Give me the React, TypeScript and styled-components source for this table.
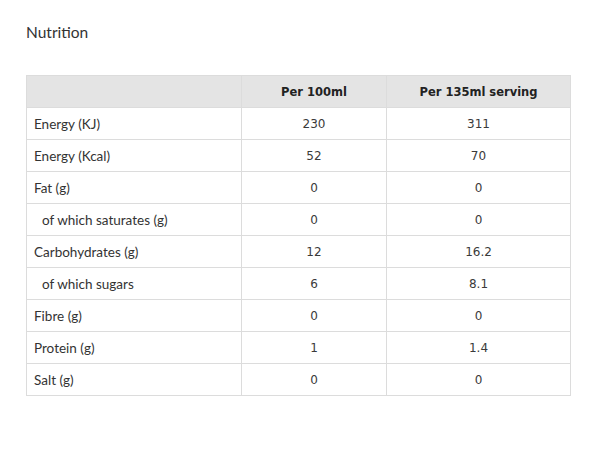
import styled, { createGlobalStyle } from 'styled-components'

type Row = {
    label: string;
    per100: string;
    perServing: string;
    sub?: boolean;
}

const rows: Row[] = [
    { label: 'Energy (KJ)', per100: '230', perServing: '311' },
    { label: 'Energy (Kcal)', per100: '52', perServing: '70' },
    { label: 'Fat (g)', per100: '0', perServing: '0' },
    { label: 'of which saturates (g)', per100: '0', perServing: '0', sub: true },
    { label: 'Carbohydrates (g)', per100: '12', perServing: '16.2' },
    { label: 'of which sugars', per100: '6', perServing: '8.1', sub: true },
    { label: 'Fibre (g)', per100: '0', perServing: '0' },
    { label: 'Protein (g)', per100: '1', perServing: '1.4' },
    { label: 'Salt (g)', per100: '0', perServing: '0' },
]

function App() {
    return (
        <>
            <GlobalStyle />
            <Page>
                <Title>Nutrition</Title>
                <Table>
                    <colgroup>
                        <col style={{ width: 215 }} />
                        <col style={{ width: 145 }} />
                        <col style={{ width: 184 }} />
                    </colgroup>
                    <thead>
                        <tr>
                            <TH></TH>
                            <TH>Per 100ml</TH>
                            <TH>Per 135ml serving</TH>
                        </tr>
                    </thead>
                    <tbody>
                        {rows.map(row => (
                            <tr key={row.label}>
                                <Label sub={row.sub}>{row.label}</Label>
                                <Value>{row.per100}</Value>
                                <Value>{row.perServing}</Value>
                            </tr>
                        ))}
                    </tbody>
                </Table>
            </Page>
        </>
    )
}
export default App

const GlobalStyle = createGlobalStyle`
    * {
        margin: 0;
        padding: 0;
        box-sizing: border-box;
    }
    body {
        background: #fff;
        color: #333;
        font-family: Lato, "Open Sans", sans-serif;
    }
`
const Page = styled.main`
    padding: 22px 29px 0 26px;
`
const Title = styled.h2`
    font-size: 15.5px;
    font-weight: 400;
    line-height: 20px;
    color: #333;
    margin-bottom: 33px;
`
const Table = styled.table`
    width: 545px;
    border-collapse: collapse;
    table-layout: fixed;
    border: 1px solid #dcdcdc;
`
const TH = styled.th`
    height: 32px;
    background: #e4e4e4;
    font-family: "DejaVu Sans", Verdana, sans-serif;
    font-size: 11.5px;
    font-weight: 700;
    color: #222;
    text-align: center;
    border-left: 1px solid #dcdcdc;
    &:first-child {
        border-left: none;
    }
`
const Label = styled.td<{ sub?: boolean }>`
    height: 32px;
    padding-left: ${(props) => (props.sub ? '15px' : '7px')};
    font-size: 13.5px;
    color: #333;
    border: 1px solid #dcdcdc;
`
const Value = styled.td`
    height: 32px;
    text-align: center;
    font-family: "DejaVu Sans", Verdana, sans-serif;
    font-size: 12px;
    color: #3a3a3a;
    border: 1px solid #dcdcdc;
`
